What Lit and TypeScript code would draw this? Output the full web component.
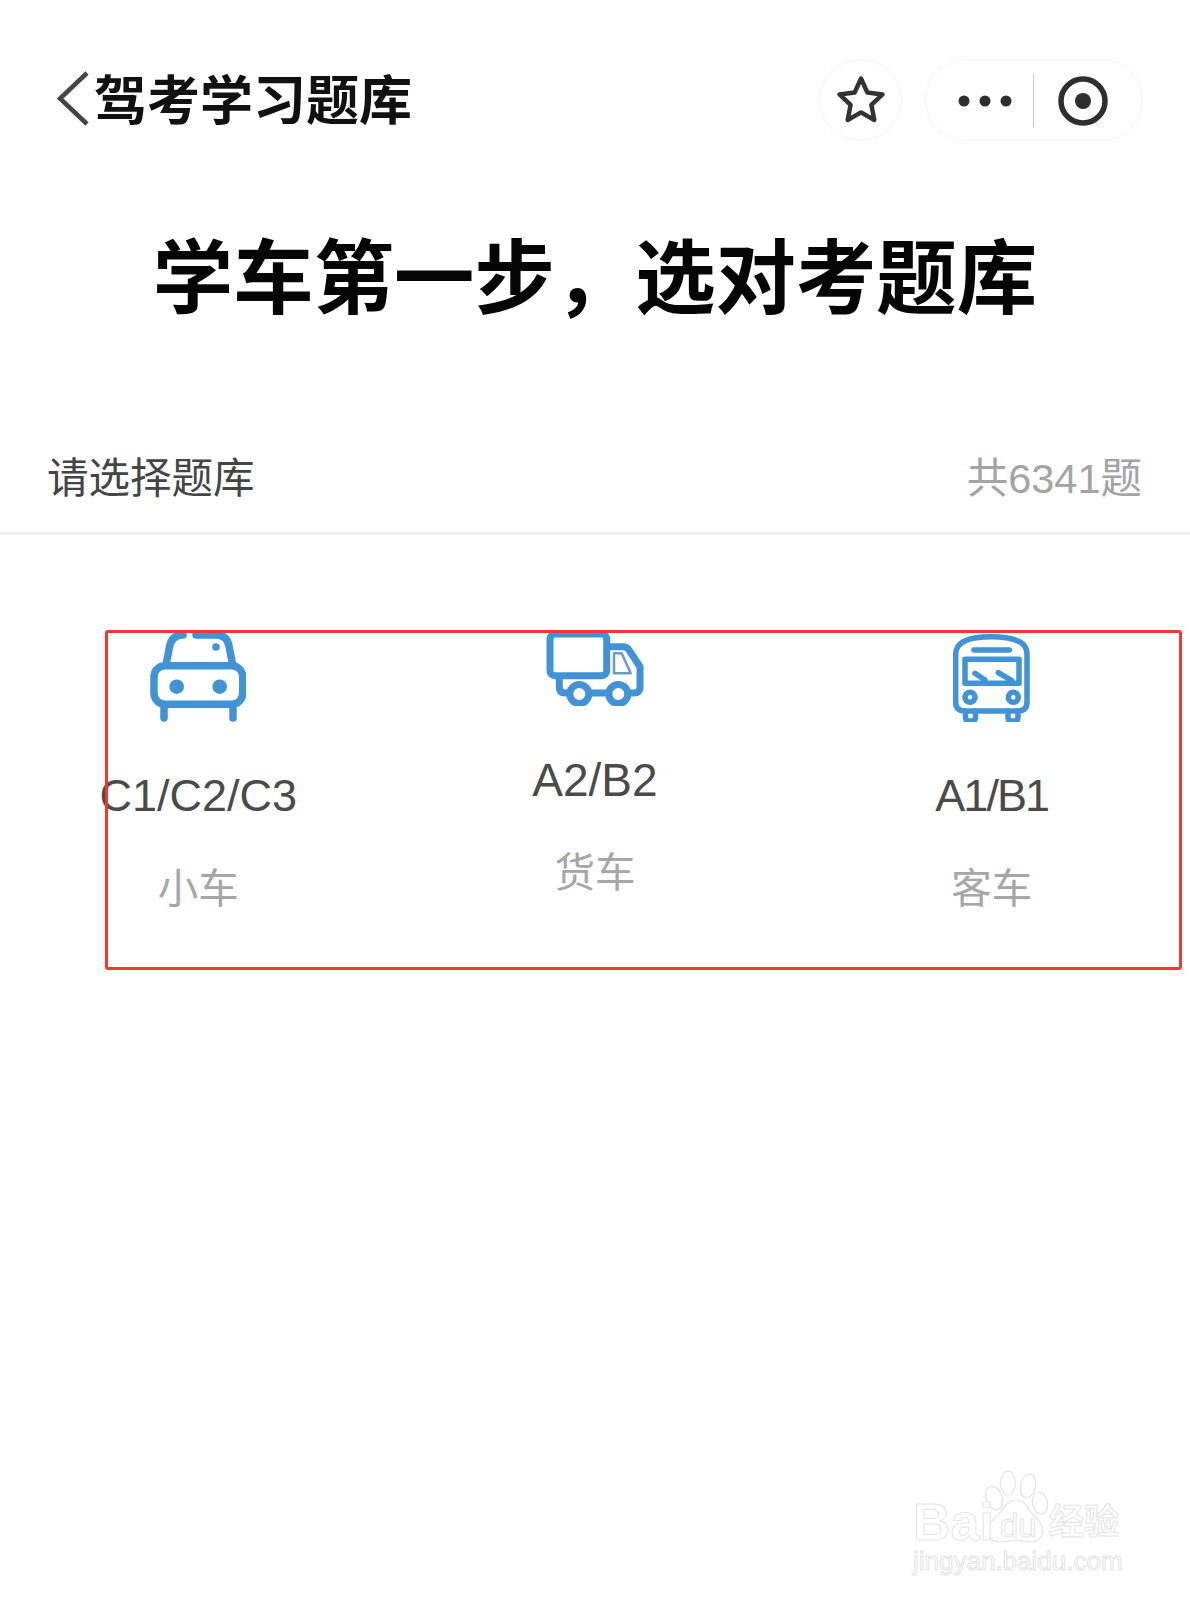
import { LitElement, html, css } from "lit";
import { customElement } from "lit/decorators.js";

@customElement("app-root")
export class AppRoot extends LitElement {
  static styles = css`
    :host { display: block; position: relative; width: 1190px; height: 1600px; background: #fff; overflow: hidden;
      font-family: "Liberation Sans", "Noto Sans CJK SC", sans-serif; }
    svg { display: block; }
    .nav { display: flex; align-items: center; margin-top: 59px; height: 82px; padding: 0 47px 0 57px; }
    .back { flex: none; width: 36px; height: 60px; }
    .nav-title { font-size: 53px; line-height: 82px; font-weight: 700; color: #111; margin: 4px 0 0 1px; flex: 1; white-space: nowrap; }
    .circle { box-sizing: border-box; width: 83px; height: 82px; border: 1px solid #f6f6f6; border-radius: 50%; display: flex; align-items: center; justify-content: center; }
    .pill { box-sizing: border-box; width: 218px; height: 82px; margin-left: 23px; border: 1px solid #f6f6f6; border-radius: 41px; display: flex; align-items: center; }
    .title { margin: 88px 0 0; height: 100px; font-size: 80.4px; line-height: 100px; font-weight: 700; color: #050505; text-align: center; white-space: nowrap; }
    .section { display: flex; justify-content: space-between; margin-top: 119px; height: 84px; padding: 0 48px 0 47px; border-bottom: 3px solid #eeeeee; line-height: 62px; font-size: 41.5px; }
    .section .left { color: #444; }
    .section .right { color: #a3a3a3; }
    .grid { display: grid; grid-template-columns: repeat(3, 1fr); margin-top: 95px; }
    .item { display: flex; flex-direction: column; align-items: center; }
    .label { margin-top: 44px; font-size: 45px; line-height: 60px; color: #4a4a4a; white-space: nowrap; }
    .label.wide { font-size: 46px; }
    .label.tight { letter-spacing: -2px; }
    .sub { margin-top: 38px; font-size: 40.5px; line-height: 50px; color: #a6a6a6; }
    .box { position: absolute; left: 105px; top: 630px; width: 1077px; height: 340px; box-sizing: border-box; border: 3px solid #ee3a33; border-radius: 3px; }
    .mark { position: absolute; left: 880px; top: 1450px; width: 280px; height: 130px; }
    .mark span { position: absolute; color: #fff; -webkit-text-stroke: 1px #e4e4e4; white-space: nowrap; }
    .mark .bai { left: 33px; top: 47px; font-size: 52px; line-height: 50px; font-weight: 700; }
    .mark .du { left: 120px; top: 61px; font-size: 33px; line-height: 30px; }
    .mark .jy { left: 169px; top: 50px; font-size: 35px; line-height: 44px; font-weight: 700; }
    .mark .url { left: 33px; top: 96px; font-size: 26px; line-height: 30px; }
  `;

  render() {
    return html`
      <div class="nav">
        <svg class="back" viewBox="0 0 36 60" fill="none"><path d="M30 3 L3 28.5 L30 54" stroke="#444" stroke-width="4.5"/></svg>
        <div class="nav-title">驾考学习题库</div>
        <div class="circle">
          <svg width="50" height="50" viewBox="0 0 50 50" fill="none"><path d="M25 3.5 L31.4 17.6 L46.5 19.4 L35.4 29.8 L38.3 45 L25 37.4 L11.7 45 L14.6 29.8 L3.5 19.4 L18.6 17.6 Z" stroke="#333" stroke-width="4.5" stroke-linejoin="round"/></svg>
        </div>
        <div class="pill">
          <svg width="216" height="80" viewBox="0 0 216 80">
            <circle cx="38" cy="41" r="5.5" fill="#2e2e2e"/><circle cx="59" cy="41" r="5.5" fill="#2e2e2e"/><circle cx="80" cy="41" r="5.5" fill="#2e2e2e"/>
            <rect x="107" y="14" width="1" height="53" fill="#c8c8c8"/>
            <circle cx="157" cy="41" r="22" fill="none" stroke="#2e2e2e" stroke-width="5.5"/><circle cx="157" cy="41" r="8" fill="#2e2e2e"/>
          </svg>
        </div>
      </div>
      <h1 class="title">学车第一步，选对考题库</h1>
      <div class="section"><div class="left">请选择题库</div><div class="right">共6341题</div></div>
      <div class="grid">
        <div class="item">
          <svg width="96" height="92" viewBox="0 0 96 92" fill="none" stroke="#4193d6" stroke-width="7.5" stroke-linecap="round" stroke-linejoin="round">
            <rect x="4" y="35.7" width="88.7" height="38.6" rx="11"/>
            <path d="M16 35 L19.5 17 Q21.5 5 33 5"/><path d="M46 5 H66 Q77 5 79 16 L82.7 35"/>
            <circle cx="66" cy="17" r="3.8" fill="#4193d6" stroke="none"/>
            <circle cx="26.7" cy="56.7" r="7.3" fill="#4193d6" stroke="none"/><circle cx="69.7" cy="56.7" r="7.3" fill="#4193d6" stroke="none"/>
            <path d="M14 75 V88 M83 75 V88"/>
          </svg>
          <div class="label">C1/C2/C3</div><div class="sub">小车</div>
        </div>
        <div class="item">
          <svg width="100" height="76" viewBox="0 0 100 76" fill="none" stroke="#4193d6" stroke-width="7" stroke-linejoin="round" stroke-linecap="round">
            <rect x="5" y="4" width="56.7" height="41.7" rx="5"/>
            <path d="M65 16.7 H78 Q82 16.7 84 20 L95 36.7 V57 Q95 63 89 63 H84"/>
            <path d="M63 63 H45"/><path d="M14.3 48 V57 Q14.3 63 20 63 H24"/>
            <circle cx="34.3" cy="64" r="9.5"/><circle cx="73.3" cy="64" r="9.5"/>
            <path d="M69 23.3 H76.7 L85.7 43.3 H69 Z" stroke="#6a9cc4" stroke-width="2.5"/>
          </svg>
          <div class="label wide">A2/B2</div><div class="sub">货车</div>
        </div>
        <div class="item">
          <svg width="84" height="92" viewBox="0 0 84 92" fill="none" stroke="#4193d6" stroke-width="5.5" stroke-linecap="round" stroke-linejoin="round">
            <path d="M5.7 24 Q5.7 6.7 41 6.7 Q77 6.7 77 24 V72 Q77 81 68 81 H15 Q5.7 81 5.7 72 Z"/>
            <path d="M24 20 H59.3"/>
            <rect x="15" y="29.3" width="54" height="24"/>
            <path d="M25 43.3 L35 50 M48.3 42.7 L61.7 50.7"/>
            <circle cx="20" cy="67.3" r="5"/><circle cx="63.3" cy="67.3" r="5"/>
            <path d="M15.5 81 V87 Q15.5 91 19 91 H22 Q25.5 91 25.5 87 V81"/>
            <path d="M58 81 V87 Q58 91 61.5 91 H64.5 Q68 91 68 87 V81"/>
          </svg>
          <div class="label tight">A1/B1</div><div class="sub">客车</div>
        </div>
      </div>
      <div class="box"></div>
      <div class="mark">
        <svg width="280" height="130" viewBox="0 0 280 130" fill="#fff" stroke="#e4e4e4" stroke-width="1.2">
          <ellipse cx="114" cy="48" rx="8" ry="12" transform="rotate(-20 114 48)"/>
          <ellipse cx="128" cy="33" rx="7.5" ry="12"/>
          <ellipse cx="148" cy="36" rx="7.5" ry="12" transform="rotate(12 148 36)"/>
          <ellipse cx="160" cy="53" rx="7.5" ry="11" transform="rotate(-12 160 53)"/>
          <path d="M136 50 C146 50 148 60 155 67 C166 76 165 92 150 92 C144 92 140 90 136 90 C131 90 127 92 120 92 C106 92 105 76 116 67 C124 60 126 50 136 50 Z"/>
        </svg>
        <span class="bai">Bai</span><span class="du">du</span><span class="jy">经验</span><span class="url">jingyan.baidu.com</span>
      </div>
    `;
  }
}
